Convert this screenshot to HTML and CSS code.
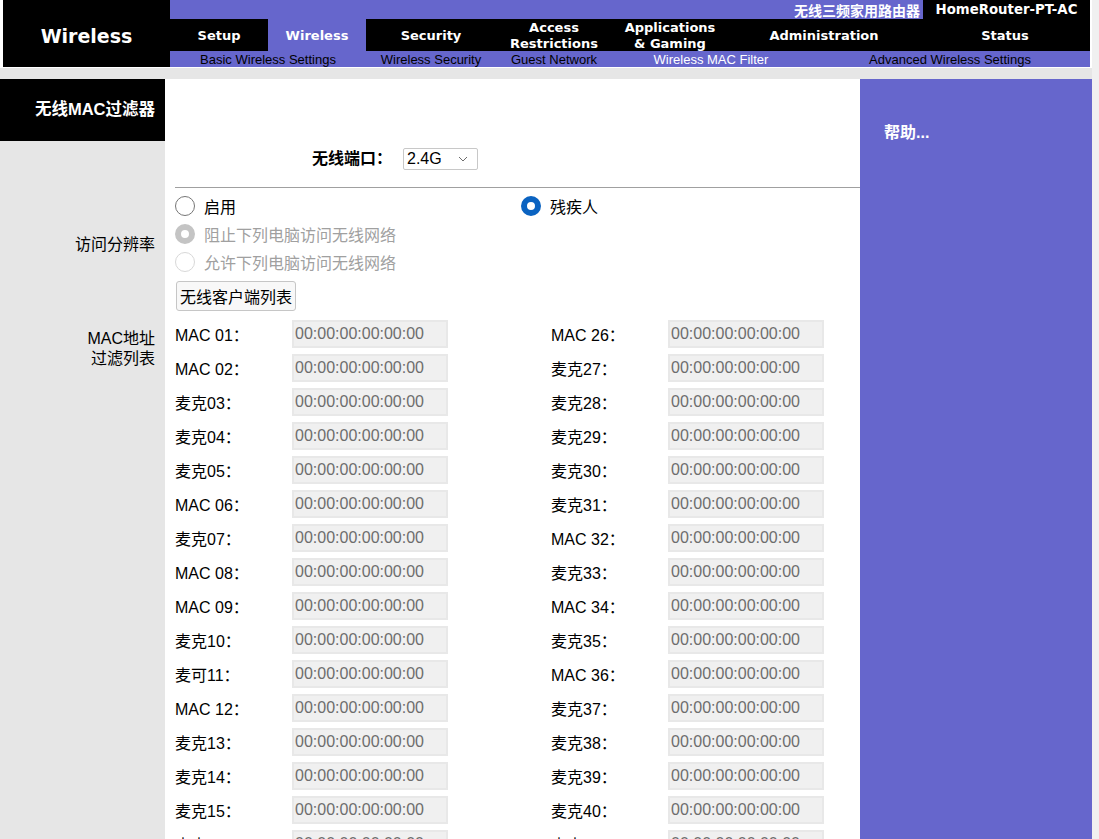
FILE: index.html
```html
<!DOCTYPE html>
<html lang="zh-CN">
<head>
    <meta charset="UTF-8">
    <title>Wireless MAC Filter</title>
    <link rel="stylesheet" href="styles.css">
</head>
<body>
<div class="page">
    <div class="header">
        <div class="logo">Wireless</div>
        <div class="nav">
            <div class="nav-top">
                <span class="product">无线三频家用路由器</span>
                <span class="model">HomeRouter-PT-AC</span>
            </div>
            <div class="tabs">
                <div class="tab w98">Setup</div>
                <div class="tab w98 active">Wireless</div>
                <div class="tab w130">Security</div>
                <div class="tab w116">Access<br>Restrictions</div>
                <div class="tab w116">Applications<br>&amp; Gaming</div>
                <div class="tab w192">Administration</div>
                <div class="tab w170">Status</div>
            </div>
            <div class="subtabs">
                <div class="subtab w196">Basic Wireless Settings</div>
                <div class="subtab w130">Wireless Security</div>
                <div class="subtab w116">Guest Network</div>
                <div class="subtab w198 active">Wireless MAC Filter</div>
                <div class="subtab w280">Advanced Wireless Settings</div>
            </div>
        </div>
    </div>
    <div class="band"></div>

    <div class="main">
        <div class="side"><div class="title">无线MAC过滤器</div></div>
        <div class="cell"></div>
        <div class="help">帮助...</div>

        <div class="side"></div>
        <div class="cell">
            <div class="port">
                <span class="port-label">无线端口：</span>
                <div class="select">
                    <span>2.4G</span>
                    <svg width="10" height="6" viewBox="0 0 10 6"><path d="M1 1 L5 5 L9 1" fill="none" stroke="#6d6d6d" stroke-width="1"/></svg>
                </div>
            </div>
        </div>

        <div class="side"><div class="side-label access">访问分辨率</div></div>
        <div class="cell pad">
            <div class="radio-line">
                <div class="choice first"><span class="radio"></span>启用</div>
                <div class="choice"><span class="radio on"></span>残疾人</div>
            </div>
            <div class="radio-line muted">
                <div class="choice"><span class="radio dim-on"></span>阻止下列电脑访问无线网络</div>
            </div>
            <div class="radio-line muted">
                <div class="choice"><span class="radio dim"></span>允许下列电脑访问无线网络</div>
            </div>
            <button class="btn">无线客户端列表</button>
        </div>

        <div class="side"><div class="side-label maclist">MAC地址<br>过滤列表</div></div>
        <div class="cell pad">
            <div class="mac-grid">
                <div class="mac"><span class="mac-label">MAC 01：</span><input class="mac-input" value="00:00:00:00:00:00" disabled></div>
                <div class="mac"><span class="mac-label">MAC 26：</span><input class="mac-input" value="00:00:00:00:00:00" disabled></div>
                <div class="mac"><span class="mac-label">MAC 02：</span><input class="mac-input" value="00:00:00:00:00:00" disabled></div>
                <div class="mac"><span class="mac-label">麦克27：</span><input class="mac-input" value="00:00:00:00:00:00" disabled></div>
                <div class="mac"><span class="mac-label">麦克03：</span><input class="mac-input" value="00:00:00:00:00:00" disabled></div>
                <div class="mac"><span class="mac-label">麦克28：</span><input class="mac-input" value="00:00:00:00:00:00" disabled></div>
                <div class="mac"><span class="mac-label">麦克04：</span><input class="mac-input" value="00:00:00:00:00:00" disabled></div>
                <div class="mac"><span class="mac-label">麦克29：</span><input class="mac-input" value="00:00:00:00:00:00" disabled></div>
                <div class="mac"><span class="mac-label">麦克05：</span><input class="mac-input" value="00:00:00:00:00:00" disabled></div>
                <div class="mac"><span class="mac-label">麦克30：</span><input class="mac-input" value="00:00:00:00:00:00" disabled></div>
                <div class="mac"><span class="mac-label">MAC 06：</span><input class="mac-input" value="00:00:00:00:00:00" disabled></div>
                <div class="mac"><span class="mac-label">麦克31：</span><input class="mac-input" value="00:00:00:00:00:00" disabled></div>
                <div class="mac"><span class="mac-label">麦克07：</span><input class="mac-input" value="00:00:00:00:00:00" disabled></div>
                <div class="mac"><span class="mac-label">MAC 32：</span><input class="mac-input" value="00:00:00:00:00:00" disabled></div>
                <div class="mac"><span class="mac-label">MAC 08：</span><input class="mac-input" value="00:00:00:00:00:00" disabled></div>
                <div class="mac"><span class="mac-label">麦克33：</span><input class="mac-input" value="00:00:00:00:00:00" disabled></div>
                <div class="mac"><span class="mac-label">MAC 09：</span><input class="mac-input" value="00:00:00:00:00:00" disabled></div>
                <div class="mac"><span class="mac-label">MAC 34：</span><input class="mac-input" value="00:00:00:00:00:00" disabled></div>
                <div class="mac"><span class="mac-label">麦克10：</span><input class="mac-input" value="00:00:00:00:00:00" disabled></div>
                <div class="mac"><span class="mac-label">麦克35：</span><input class="mac-input" value="00:00:00:00:00:00" disabled></div>
                <div class="mac"><span class="mac-label">麦可11：</span><input class="mac-input" value="00:00:00:00:00:00" disabled></div>
                <div class="mac"><span class="mac-label">MAC 36：</span><input class="mac-input" value="00:00:00:00:00:00" disabled></div>
                <div class="mac"><span class="mac-label">MAC 12：</span><input class="mac-input" value="00:00:00:00:00:00" disabled></div>
                <div class="mac"><span class="mac-label">麦克37：</span><input class="mac-input" value="00:00:00:00:00:00" disabled></div>
                <div class="mac"><span class="mac-label">麦克13：</span><input class="mac-input" value="00:00:00:00:00:00" disabled></div>
                <div class="mac"><span class="mac-label">麦克38：</span><input class="mac-input" value="00:00:00:00:00:00" disabled></div>
                <div class="mac"><span class="mac-label">麦克14：</span><input class="mac-input" value="00:00:00:00:00:00" disabled></div>
                <div class="mac"><span class="mac-label">麦克39：</span><input class="mac-input" value="00:00:00:00:00:00" disabled></div>
                <div class="mac"><span class="mac-label">麦克15：</span><input class="mac-input" value="00:00:00:00:00:00" disabled></div>
                <div class="mac"><span class="mac-label">麦克40：</span><input class="mac-input" value="00:00:00:00:00:00" disabled></div>
                <div class="mac"><span class="mac-label">麦克16：</span><input class="mac-input" value="00:00:00:00:00:00" disabled></div>
                <div class="mac"><span class="mac-label">麦克41：</span><input class="mac-input" value="00:00:00:00:00:00" disabled></div>
                <div class="mac"><span class="mac-label">麦克17：</span><input class="mac-input" value="00:00:00:00:00:00" disabled></div>
                <div class="mac"><span class="mac-label">MAC 42：</span><input class="mac-input" value="00:00:00:00:00:00" disabled></div>
                <div class="mac"><span class="mac-label">MAC 18：</span><input class="mac-input" value="00:00:00:00:00:00" disabled></div>
                <div class="mac"><span class="mac-label">麦克43：</span><input class="mac-input" value="00:00:00:00:00:00" disabled></div>
                <div class="mac"><span class="mac-label">麦克19：</span><input class="mac-input" value="00:00:00:00:00:00" disabled></div>
                <div class="mac"><span class="mac-label">麦克44：</span><input class="mac-input" value="00:00:00:00:00:00" disabled></div>
                <div class="mac"><span class="mac-label">MAC 20：</span><input class="mac-input" value="00:00:00:00:00:00" disabled></div>
                <div class="mac"><span class="mac-label">麦克45：</span><input class="mac-input" value="00:00:00:00:00:00" disabled></div>
            </div>
        </div>
    </div>
</div>
</body>
</html>
```

FILE: styles.css
```css
html {
    background: #f0f0f0;
}
body {
    margin: 0;
    padding: 0;
    font-family: "Liberation Sans", "Noto Sans CJK SC", sans-serif;
    font-size: 16px;
    color: #000;
}
.page {
    width: 1092px;
    background: #fff;
}

/* header */
.header {
    display: flex;
    padding: 0 2px 1px 3px;
    background: #fff;
}
.logo {
    width: 167px;
    background: #000;
    color: #fff;
    font: bold 19px "DejaVu Sans", sans-serif;
    display: flex;
    align-items: center;
    justify-content: center;
    padding-top: 4px;
    box-sizing: border-box;
}
.nav {
    width: 920px;
}
.nav-top {
    height: 19px;
    display: flex;
    justify-content: flex-end;
    background: #6666cc;
    color: #fff;
    line-height: 19px;
}
.product {
    font: bold 14px "Noto Sans CJK SC", sans-serif;
    padding-right: 3px;
    line-height: 20px;
}
.model {
    width: 167px;
    background: #000;
    text-align: center;
    font: bold 13.3px "DejaVu Sans", sans-serif;
    line-height: 20px;
}
.tabs {
    display: flex;
    height: 32px;
    background: #000;
}
.tab {
    display: flex;
    align-items: center;
    justify-content: center;
    text-align: center;
    color: #fff;
    font: bold 13px/16px "DejaVu Sans", sans-serif;
    padding-top: 1px;
    box-sizing: border-box;
}
.tab.active {
    background: #6666cc;
}
.subtabs {
    display: flex;
    height: 16px;
    background: #6666cc;
}
.subtab {
    text-align: center;
    font: 13px/17px "Liberation Sans", sans-serif;
    color: #000;
}
.subtab.active {
    color: #fff;
}
.w98 { width: 98px; }
.w116 { width: 116px; }
.w130 { width: 130px; }
.w170 { width: 170px; }
.w192 { width: 192px; }
.w196 { width: 196px; }
.w198 { width: 198px; }
.w280 { width: 280px; }

.band {
    height: 11px;
    background: #e6e6e6;
}

/* body grid */
.main {
    display: grid;
    grid-template-columns: 165px 695px 232px;
}
.side {
    background: #e6e6e6;
}
.title {
    height: 62px;
    background: #000;
    color: #fff;
    font-weight: bold;
    font-size: 16.5px;
    text-align: right;
    padding-right: 10px;
    line-height: 60px;
}
.side-label {
    text-align: right;
    padding-right: 10px;
    line-height: 20px;
}
.side-label.access {
    padding-top: 47px;
}
.side-label.maclist {
    padding-top: 12px;
}
.help {
    grid-column: 3;
    grid-row: 1 / span 4;
    background: #6666cc;
    color: #fff;
    font-weight: bold;
    padding: 44px 0 0 24px;
    line-height: 20px;
}
.cell.pad {
    padding-left: 10px;
}

/* port selector */
.port {
    display: flex;
    align-items: flex-start;
    height: 39px;
    padding: 7px 0 0 137px;
    margin-left: 10px;
    border-bottom: 1px solid #a0a0a0;
}
.port-label {
    font-weight: bold;
    margin-right: 11px;
    line-height: 22px;
}
.select {
    width: 75px;
    height: 22px;
    box-sizing: border-box;
    border: 1px solid #c8c8c8;
    border-radius: 2px;
    display: flex;
    align-items: center;
    justify-content: space-between;
    padding: 0 9px 0 3px;
    background: #fff;
}

/* radios */
.cell.pad > .radio-line:first-child {
    margin-top: 4px;
}
.radio-line {
    display: flex;
    height: 28px;
    align-items: center;
}
.radio-line.muted {
    color: #a0a0a0;
}
.choice {
    display: flex;
    align-items: center;
    gap: 9px;
}
.choice.first {
    width: 346px;
}
.radio {
    width: 20px;
    height: 20px;
    box-sizing: border-box;
    border-radius: 50%;
    border: 1px solid #767676;
    background: #fff;
}
.radio.on {
    border: 6px solid #0b63c1;
}
.radio.dim-on {
    border: 6px solid #c4c4c4;
}
.radio.dim {
    border-color: #d8d8d8;
}
.btn {
    margin: 5px 0 6px 1px;
    height: 30px;
    padding: 0 3px;
    font: 16px "Noto Sans CJK SC", sans-serif;
    background: #f8f8f8;
    border: 1px solid #c6c6c6;
    border-radius: 3px;
    color: #000;
    display: block;
}

/* mac list */
.mac-grid {
    display: grid;
    grid-template-columns: 376px 310px;
}
.mac {
    display: flex;
    align-items: center;
    height: 34px;
}
.mac-label {
    width: 117px;
}
.mac-input {
    width: 156px;
    height: 28px;
    box-sizing: border-box;
    margin: 0;
    padding: 0 1px;
    border: 2px solid #e8e8e8;
    background: #f0f0f0;
    color: #6d6d6d;
    font: 16px "Liberation Sans", sans-serif;
}
```
